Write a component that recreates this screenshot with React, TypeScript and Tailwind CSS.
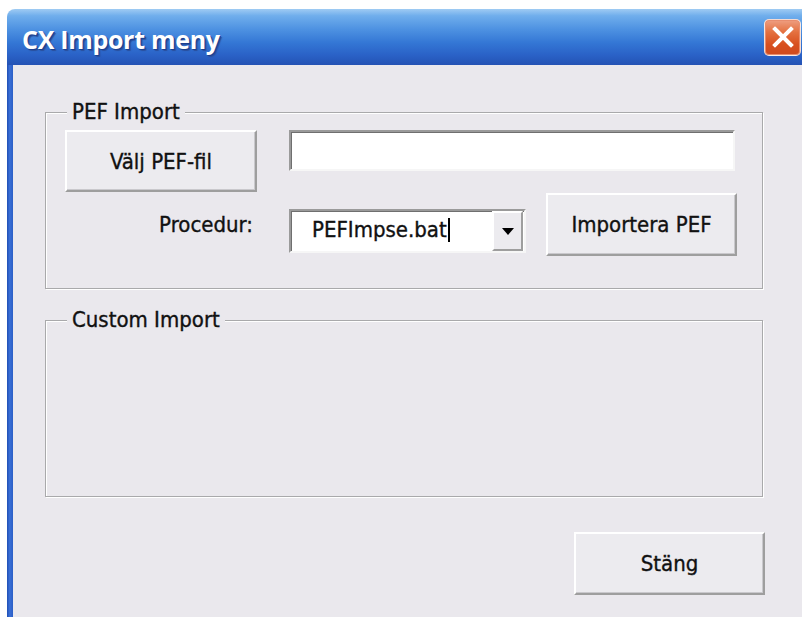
import type { ReactNode } from "react";

const uiFont =
  "font-['DejaVu_Sans_Condensed','DejaVu_Sans',sans-serif] [-webkit-text-stroke:0.35px_#111]";

function RaisedButton({
  children,
  className,
}: {
  children: ReactNode;
  className: string;
}) {
  return (
    <button
      className={`flex items-center justify-center border-t-2 border-l-2 border-t-white border-l-white border-r-2 border-b-2 border-r-[#9e9e9e] border-b-[#9e9e9e] bg-[#ecebef] text-[22px] text-[#111] shadow-[inset_-1px_-1px_0_#c9c8cc] ${className}`}
      type="button"
    >
      {children}
    </button>
  );
}

function GroupBox({
  label,
  className,
  children,
}: {
  label: string;
  className: string;
  children?: ReactNode;
}) {
  return (
    <div
      className={`relative border border-[#a9a9ab] shadow-[inset_1px_1px_0_#fff,1px_1px_0_#fff] ${className}`}
    >
      <span className="absolute top-[-14px] left-[21px] bg-[#eae8ed] px-[5px] text-[22px] leading-[26px] text-[#111]">
        {label}
      </span>
      {children}
    </div>
  );
}

function CloseButton() {
  return (
    <button
      className="flex h-[37px] w-[37px] items-center justify-center rounded-[5px] border border-white/80 bg-[linear-gradient(180deg,#ee9f82_0%,#e4703f_35%,#d8501f_70%,#cf4a1f_100%)] shadow-[inset_0_0_0_1px_#e88d6e]"
      type="button"
    >
      <svg height="24" viewBox="0 0 24 24" width="24">
        <path
          d="M4 4 L20 20 M20 4 L4 20"
          stroke="#fff"
          strokeLinecap="square"
          strokeWidth="4"
        />
      </svg>
    </button>
  );
}

export default function App() {
  return (
    <div
      className={`h-[617px] w-[802px] overflow-hidden bg-white pt-[9px] pl-[7px] ${uiFont}`}
    >
      <div className="flex h-[608px] flex-col overflow-hidden rounded-tl-[8px]">
        {/* title bar */}
        <div className="flex h-[56px] shrink-0 items-center justify-between bg-[linear-gradient(180deg,#9fcbf3_0%,#70aeec_12%,#4f93e2_35%,#3477d5_60%,#2a62c7_82%,#2452b4_100%)] pr-[1px] pl-[15px]">
          <span className="pt-[5px] font-['Open_Sans',sans-serif] text-[25px] font-bold tracking-[-0.3px] text-white [-webkit-text-stroke:0] [text-shadow:1px_1px_0_#1c3f8f,2px_2px_1px_#2a4f9c]">
            CX Import meny
          </span>
          <CloseButton />
        </div>

        <div className="flex flex-1">
          {/* left frame */}
          <div className="w-[6px] shrink-0 bg-[linear-gradient(90deg,#1f4fb5_0%,#3a6fd6_45%,#2b5ec6_100%)]" />

          <div className="flex flex-1 flex-col bg-[#eae8ed] pt-[47px] pl-[32px]">
            <GroupBox className="h-[177px] w-[718px]" label="PEF Import">
              <div className="flex items-start pt-[17px] pl-[19px]">
                <RaisedButton className="h-[62px] w-[192px]">Välj PEF-fil</RaisedButton>
                <div className="ml-[32px] h-[41px] w-[446px] border-t-2 border-l-2 border-t-[#9a9a9a] border-l-[#9a9a9a] border-r-2 border-b-2 border-r-[#f6f6f6] border-b-[#f6f6f6] bg-white shadow-[inset_1px_1px_0_#6f6f6f]" />
              </div>

              <div className="mt-[1px] flex items-start">
                <div className="mt-[19px] w-[207px] text-right text-[22px] leading-[26px] text-[#111]">
                  Procedur:
                </div>
                <div className="mt-[16px] ml-[36px] flex h-[44px] w-[237px] items-center border-t-2 border-l-2 border-t-[#9a9a9a] border-l-[#9a9a9a] border-r-2 border-b-2 border-r-[#f6f6f6] border-b-[#f6f6f6] bg-white shadow-[inset_1px_1px_0_#6f6f6f]">
                  <div className="flex flex-1 items-center pb-[3px] pl-[21px] text-[22px] text-[#111]">
                    <span>PEFImpse.bat</span>
                    <span className="ml-[1px] h-[24px] w-[2px] bg-black" />
                  </div>
                  <div className="mr-[1px] flex h-[40px] w-[31px] items-center justify-center border-t-2 border-l-2 border-t-white border-l-white border-r-2 border-b-2 border-r-[#9e9e9e] border-b-[#9e9e9e] bg-[#ecebef]">
                    <svg height="7" viewBox="0 0 12 7" width="12">
                      <path d="M0 0 H12 L6 7 Z" fill="#000" />
                    </svg>
                  </div>
                </div>
                <RaisedButton className="ml-[20px] h-[63px] w-[191px]">Importera PEF</RaisedButton>
              </div>
            </GroupBox>

            <GroupBox className="mt-[31px] h-[177px] w-[718px]" label="Custom Import" />

            <div className="mt-[35px] ml-[529px]">
              <RaisedButton className="h-[63px] w-[191px]">Stäng</RaisedButton>
            </div>
          </div>
        </div>
      </div>
    </div>
  );
}
